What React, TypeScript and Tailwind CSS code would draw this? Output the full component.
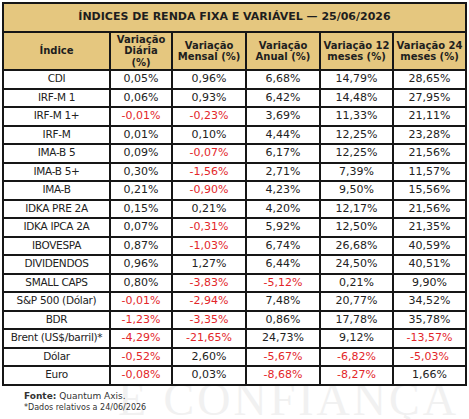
const rows: [string, string, string, string, string, string][] = [
  ['CDI', '0,05%', '0,96%', '6,68%', '14,79%', '28,65%'],
  ['IRF-M 1', '0,06%', '0,93%', '6,42%', '14,48%', '27,95%'],
  ['IRF-M 1+', '-0,01%', '-0,23%', '3,69%', '11,33%', '21,11%'],
  ['IRF-M', '0,01%', '0,10%', '4,44%', '12,25%', '23,28%'],
  ['IMA-B 5', '0,09%', '-0,07%', '6,17%', '12,25%', '21,56%'],
  ['IMA-B 5+', '0,30%', '-1,56%', '2,71%', '7,39%', '11,57%'],
  ['IMA-B', '0,21%', '-0,90%', '4,23%', '9,50%', '15,56%'],
  ['IDKA PRE 2A', '0,15%', '0,21%', '4,20%', '12,17%', '21,56%'],
  ['IDKA IPCA 2A', '0,07%', '-0,31%', '5,92%', '12,50%', '21,35%'],
  ['IBOVESPA', '0,87%', '-1,03%', '6,74%', '26,68%', '40,59%'],
  ['DIVIDENDOS', '0,96%', '1,27%', '6,44%', '24,50%', '40,51%'],
  ['SMALL CAPS', '0,80%', '-3,83%', '-5,12%', '0,21%', '9,90%'],
  ['S&P 500 (Dólar)', '-0,01%', '-2,94%', '7,48%', '20,77%', '34,52%'],
  ['BDR', '-1,23%', '-3,35%', '0,86%', '17,78%', '35,78%'],
  ['Brent (US$/barril)*', '-4,29%', '-21,65%', '24,73%', '9,12%', '-13,57%'],
  ['Dólar', '-0,52%', '2,60%', '-5,67%', '-6,82%', '-5,03%'],
  ['Euro', '-0,08%', '0,03%', '-8,68%', '-8,27%', '1,66%'],
];

const headers = [
  ['Índice'],
  ['Variação', 'Diária', '(%)'],
  ['Variação', 'Mensal (%)'],
  ['Variação', 'Anual (%)'],
  ['Variação 12', 'meses (%)'],
  ['Variação 24', 'meses (%)'],
];

export default function App() {
  return (
    <div className="relative w-[469px] h-[419px] bg-white overflow-hidden font-['DejaVu_Sans',Verdana,sans-serif]">
      {/* watermark, the table covers its top */}
      <div className="absolute top-[386px] left-[118px] text-[46px] leading-[28px] tracking-[3px] text-[#f1f1f1] whitespace-nowrap font-['Liberation_Serif',serif]">
        E CONFIANÇA
      </div>

      <div className="relative pt-[2px] pl-[2px]">
        {/* Table */}
        <div className="w-[465px] bg-[#161616] p-[2px] gap-[2px] grid grid-cols-[105px_60px_72px_72px_71px_71px] grid-rows-[27px_36px_repeat(17,16.5px)]">
          <div className="col-span-6 bg-[#e5c77f] flex items-center justify-center text-[11px] font-bold text-[#1e1e1e] whitespace-nowrap">
            ÍNDICES DE RENDA FIXA E VARIÁVEL — 25/06/2026
          </div>

          {headers.map((lines, i) => (
            <div
              key={i}
              className="bg-[#e5c77f] flex flex-col items-center justify-center text-[10px] leading-[11.5px] font-bold text-[#1e1e1e] whitespace-nowrap"
            >
              {lines.map((l) => (
                <span key={l}>{l}</span>
              ))}
            </div>
          ))}

          {rows.map((row) =>
            row.map((cell, j) => (
              <div
                key={row[0] + j}
                className={`bg-white flex items-center justify-center whitespace-nowrap ${
                  j === 0 ? 'text-[10.5px] tracking-[-0.3px]' : 'text-[11px]'
                } ${cell.startsWith('-') ? 'text-[#e3262a]' : 'text-[#222222]'}`}
              >
                {cell}
              </div>
            ))
          )}
        </div>

        {/* Footer */}
        <div className="pl-[22px] mt-[4px] text-[#333333]">
          <div className="text-[9px] leading-[12px]">
            <span className="font-bold">Fonte:</span> Quantum Axis.
          </div>
          <div className="text-[8px] leading-[12px]">*Dados relativos a 24/06/2026</div>
        </div>
      </div>
    </div>
  );
}
